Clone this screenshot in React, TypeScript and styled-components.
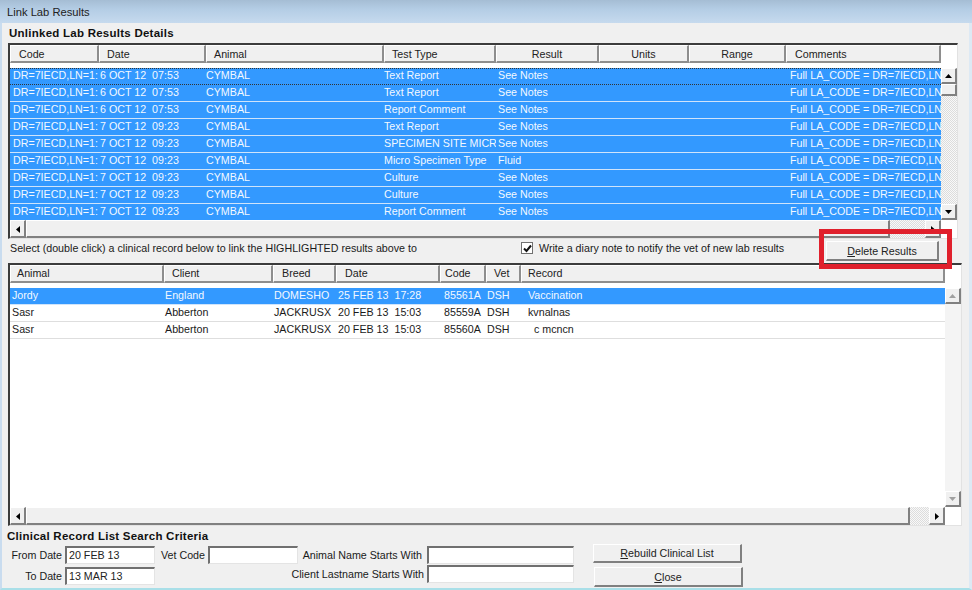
import React from 'react';
import styled, { createGlobalStyle, css } from 'styled-components';

const GlobalStyle = createGlobalStyle`
  html, body { margin: 0; padding: 0; height: 100%; overflow: hidden; }
  body { font-family: "Liberation Sans", Arial, sans-serif; font-size: 10.7px; color: #1a1a1a; }
`;

const dither = 'repeating-conic-gradient(#dcdcdc 0 25%, #f8f8f8 0 50%) 0 0 / 2px 2px';

const Window = styled.div`
  width: 972px;
  height: 590px;
  box-sizing: border-box;
  position: relative;
  background: #f0f0f0;
  display: flex;
  flex-direction: column;
  border-left: 2px solid #c9dcef;
  border-right: 3px solid #dde9f4;
  border-bottom: 2px solid #a9dfe8;
`;

const TitleBar = styled.div`
  height: 23px;
  margin: 0 -3px 0 -2px;
  padding: 0 0 0 7px;
  display: flex;
  align-items: center;
  font-size: 11.2px;
  color: #222;
  background: linear-gradient(#a5bdd4, #b4cde5 40%, #c6daee);
`;

const Body = styled.div`
  flex: 1;
  display: flex;
  flex-direction: column;
  padding: 0 0 0 6px;
`;

const SectionTitle = styled.div<{ $top: number; $left: number }>`
  font-weight: bold;
  font-size: 11.5px;
  color: #111;
  height: 14px;
  line-height: 14px;
  margin: ${p => p.$top}px 0 0 ${p => p.$left}px;
  letter-spacing: 0.25px;
  white-space: nowrap;
`;

const Panel = styled.div<{ $width: number; $height: number; $marginTop: number }>`
  width: ${p => p.$width}px;
  height: ${p => p.$height}px;
  margin-top: ${p => p.$marginTop}px;
  box-sizing: border-box;
  flex-shrink: 0;
  background: #fff;
  border-top: 2px solid #3c3c3c;
  border-left: 2px solid #3c3c3c;
  border-right: 1px solid #e2e2e2;
  border-bottom: 1px solid #e2e2e2;
  display: grid;
  grid-template-columns: 1fr 16px;
  grid-template-rows: 18px 1fr 18px;
`;

const HeaderRow = styled.div<{ $cols: string }>`
  grid-column: 1;
  display: grid;
  grid-template-columns: ${p => p.$cols};
  height: 18px;
`;

const HeaderCell = styled.div<{ $pad: number; $center?: boolean; $line: number }>`
  box-sizing: border-box;
  background: #f0f0f0;
  border-top: 1px solid #fff;
  border-left: 1px solid #fff;
  border-right: 2px solid #8e8e8e;
  border-bottom: 2px solid #8e8e8e;
  padding-left: ${p => p.$pad}px;
  line-height: ${p => p.$line}px;
  color: #222;
  white-space: nowrap;
  overflow: hidden;
  ${p => p.$center && css`
    text-align: center;
    padding-left: 0;
  `}
`;

const Rows = styled.div`
  grid-column: 1;
  grid-row: 2;
  padding-top: 5px;
  overflow: hidden;
`;

const Row = styled.div<{ $cols: string; $selected?: boolean; $focus?: boolean }>`
  display: grid;
  grid-template-columns: ${p => p.$cols};
  box-sizing: border-box;
  height: 17px;
  line-height: 15px;
  border-bottom: 1px solid #dedede;
  ${p => p.$selected && css`
    background: #3399ff;
    color: #f2f8ff;
    border-bottom-color: #cfe4fb;
  `}
  ${p => p.$focus && css`
    border-top: 1px dotted #333;
    border-bottom: 1px dotted #333;
    line-height: 13px;
  `}
`;

const Cell = styled.div<{ $pad: number }>`
  padding-left: ${p => p.$pad}px;
  white-space: pre;
  overflow: hidden;
`;

const VScroll = styled.div`
  grid-column: 2;
  grid-row: 2;
  display: flex;
  flex-direction: column;
  margin-top: 5px;
`;

const HScroll = styled.div`
  grid-column: 1;
  grid-row: 3;
  display: flex;
  background: #f0f0f0;
`;

const ArrowButton = styled.div<{ $disabled?: boolean; $horizontal?: boolean }>`
  width: 16px;
  height: ${p => (p.$horizontal ? 18 : 16)}px;
  padding-top: ${p => (p.$horizontal ? 2 : 0)}px;
  flex-shrink: 0;
  box-sizing: border-box;
  background: #f0f0f0;
  border-top: 1px solid #fff;
  border-left: 1px solid #fff;
  border-right: 2px solid #808080;
  border-bottom: 2px solid #808080;
  display: flex;
  align-items: center;
  justify-content: center;
  color: ${p => (p.$disabled ? '#a0a0a0' : '#000')};
`;

const Thumb = styled.div`
  flex-shrink: 0;
  box-sizing: border-box;
  background: #f0f0f0;
  border-top: 1px solid #fff;
  border-left: 1px solid #fff;
  border-right: 2px solid #808080;
  border-bottom: 2px solid #808080;
`;

const VThumb = styled(Thumb)`
  height: 12px;
`;

const HThumb = styled(Thumb)<{ $width: number }>`
  width: ${p => p.$width}px;
`;

const Track = styled.div<{ $plain?: boolean }>`
  flex: 1;
  background: ${p => (p.$plain ? '#f4f4f4' : dither)};
`;

const MiddleBar = styled.div`
  height: 24px;
  display: flex;
  align-items: flex-start;
  width: 950px;
`;

const Hint = styled.div`
  width: 513px;
  padding: 2px 0 0 2px;
  box-sizing: border-box;
  line-height: 14px;
`;

const CheckLabel = styled.label`
  display: flex;
  align-items: center;
  gap: 6px;
  width: 305px;
  line-height: 14px;
  padding-top: 2px;
`;

const CheckBox = styled.span`
  width: 12px;
  height: 12px;
  box-sizing: border-box;
  background: #fff;
  border: 1px solid #707070;
  display: flex;
  align-items: center;
  justify-content: center;
`;

const Button = styled.div<{ $width: number; $height: number }>`
  width: ${p => p.$width}px;
  height: ${p => p.$height}px;
  box-sizing: border-box;
  flex-shrink: 0;
  background: #f0f0f0;
  border-top: 1px solid #fff;
  border-left: 1px solid #fff;
  border-right: 2px solid #808080;
  border-bottom: 2px solid #808080;
  display: flex;
  align-items: center;
  justify-content: center;
  color: #222;
`;

const DeleteWrap = styled.div`
  padding-top: 2px;
`;

const Annotation = styled.div`
  position: absolute;
  left: 817px;
  top: 229px;
  width: 133px;
  height: 40px;
  box-sizing: border-box;
  border: 5px solid #e0202c;
  pointer-events: none;
`;

const Search = styled.div`
  display: flex;
  margin-top: 3px;
`;

const FieldColumn = styled.div<{ $width: number; $gap?: number }>`
  width: ${p => p.$width}px;
  flex-shrink: 0;
  display: flex;
  flex-direction: column;
  gap: ${p => p.$gap ?? 3}px;
`;

const NamesColumn = styled(FieldColumn)`
  margin-left: -8px;
`;

const Field = styled.div<{ $gap?: number }>`
  display: flex;
  align-items: center;
  justify-content: flex-end;
  gap: ${p => p.$gap ?? 3}px;
  height: 18px;
  white-space: nowrap;
`;

const Input = styled.div<{ $width: number }>`
  width: ${p => p.$width}px;
  height: 18px;
  box-sizing: border-box;
  background: #fff;
  border-top: 2px solid #707070;
  border-left: 2px solid #707070;
  border-right: 1px solid #e4e4e4;
  border-bottom: 1px solid #e4e4e4;
  padding-left: 2px;
  line-height: 15px;
  color: #222;
`;

const ButtonColumn = styled.div`
  margin: -2px 0 0 19px;
  display: flex;
  flex-direction: column;
  gap: 4px;
`;

const CloseButton = styled(Button)`
  margin-left: 1px;
`;

const Up = ({ color = '#000' }: { color?: string }) => (
  <svg width="7" height="4" viewBox="0 0 7 4"><path d="M3.5 0L7 4H0z" fill={color} /></svg>
);
const Down = ({ color = '#000' }: { color?: string }) => (
  <svg width="7" height="4" viewBox="0 0 7 4"><path d="M0 0h7L3.5 4z" fill={color} /></svg>
);
const Left = () => (
  <svg width="4" height="7" viewBox="0 0 4 7"><path d="M4 0v7L0 3.5z" fill="#000" /></svg>
);
const Right = () => (
  <svg width="4" height="7" viewBox="0 0 4 7"><path d="M0 0l4 3.5L0 7z" fill="#000" /></svg>
);

const labCols = '89px 107px 178px 112px 103px 90px 97px 155px';
const labHeaders: [string, number, boolean?][] = [
  ['Code', 8],
  ['Date', 7],
  ['Animal', 7],
  ['Test Type', 7],
  ['Result', 0, true],
  ['Units', 0, true],
  ['Range', 0, true],
  ['Comments', 8],
];
const labPads = [3, 1, 0, 0, 2, 0, 0, 4];
const code = 'DR=7IECD,LN=1:';
const full = 'Full LA_CODE = DR=7IECD,LN=1';
const labRows = [
  ['6 OCT 12  07:53', 'Text Report', 'See Notes'],
  ['6 OCT 12  07:53', 'Text Report', 'See Notes'],
  ['6 OCT 12  07:53', 'Report Comment', 'See Notes'],
  ['7 OCT 12  09:23', 'Text Report', 'See Notes'],
  ['7 OCT 12  09:23', 'SPECIMEN SITE MICRO', 'See Notes'],
  ['7 OCT 12  09:23', 'Micro Specimen Type', 'Fluid'],
  ['7 OCT 12  09:23', 'Culture', 'See Notes'],
  ['7 OCT 12  09:23', 'Culture', 'See Notes'],
  ['7 OCT 12  09:23', 'Report Comment', 'See Notes'],
];

const clinicalCols = '154px 109px 63px 104px 46px 35px 424px';
const clinicalHeaders: [string, number][] = [
  ['Animal', 6],
  ['Client', 7],
  ['Breed', 8],
  ['Date', 8],
  ['Code', 4],
  ['Vet', 7],
  ['Record', 6],
];
const clinicalPads = [2, 1, 1, 2, 4, 1, 7];
const clinicalRows = [
  ['Jordy', 'England', 'DOMESHO', '25 FEB 13  17:28', '85561A', 'DSH', 'Vaccination'],
  ['Sasr', 'Abberton', 'JACKRUSX', '20 FEB 13  15:03', '85559A', 'DSH', 'kvnalnas'],
  ['Sasr', 'Abberton', 'JACKRUSX', '20 FEB 13  15:03', '85560A', 'DSH', '  c mcncn'],
];

export default function App() {
  return (
    <Window>
      <GlobalStyle />
      <TitleBar>Link Lab Results</TitleBar>
      <Body>
        <SectionTitle $top={3} $left={1}>Unlinked Lab Results Details</SectionTitle>
        <Panel $width={950} $height={196} $marginTop={3}>
          <HeaderRow $cols={labCols}>
            {labHeaders.map(([label, pad, center]) => (
              <HeaderCell key={label} $pad={pad} $center={center} $line={17}>{label}</HeaderCell>
            ))}
          </HeaderRow>
          <Rows>
            {labRows.map((r, i) => (
              <Row key={i} $cols={labCols} $selected $focus={i === 0}>
                {[code, r[0], 'CYMBAL', r[1], r[2], '', '', full].map((text, c) => (
                  <Cell key={c} $pad={labPads[c]}>{text}</Cell>
                ))}
              </Row>
            ))}
          </Rows>
          <VScroll>
            <ArrowButton><Up /></ArrowButton>
            <VThumb />
            <Track />
            <ArrowButton><Down /></ArrowButton>
          </VScroll>
          <HScroll>
            <ArrowButton $horizontal><Left /></ArrowButton>
            <HThumb $width={864} />
            <Track />
            <ArrowButton $horizontal><Right /></ArrowButton>
          </HScroll>
        </Panel>
        <MiddleBar>
          <Hint>Select (double click) a clinical record below to link the HIGHLIGHTED results above to</Hint>
          <CheckLabel>
            <CheckBox>
              <svg width="9" height="9" viewBox="0 0 9 9"><path d="M1 4.5l2.5 2.5L8 1.5" fill="none" stroke="#111" strokeWidth="2" /></svg>
            </CheckBox>
            Write a diary note to notify the vet of new lab results
          </CheckLabel>
          <DeleteWrap>
            <Button $width={113} $height={20}><span><u>D</u>elete Results</span></Button>
          </DeleteWrap>
        </MiddleBar>
        <Panel $width={954} $height={263} $marginTop={0}>
          <HeaderRow $cols={clinicalCols}>
            {clinicalHeaders.map(([label, pad]) => (
              <HeaderCell key={label} $pad={pad} $line={15}>{label}</HeaderCell>
            ))}
          </HeaderRow>
          <Rows>
            {clinicalRows.map((r, i) => (
              <Row key={i} $cols={clinicalCols} $selected={i === 0}>
                {r.map((text, c) => (
                  <Cell key={c} $pad={clinicalPads[c]}>{text}</Cell>
                ))}
              </Row>
            ))}
          </Rows>
          <VScroll>
            <ArrowButton $disabled><Up color="#a0a0a0" /></ArrowButton>
            <Track $plain />
            <ArrowButton $disabled><Down color="#a0a0a0" /></ArrowButton>
          </VScroll>
          <HScroll>
            <ArrowButton $horizontal><Left /></ArrowButton>
            <HThumb $width={884} />
            <Track />
            <ArrowButton $horizontal><Right /></ArrowButton>
          </HScroll>
        </Panel>
        <SectionTitle $top={3} $left={-1}>Clinical Record List Search Criteria</SectionTitle>
        <Search>
          <FieldColumn $width={147}>
            <Field>From Date<Input $width={90}>20 FEB 13</Input></Field>
            <Field>To Date<Input $width={90}>13 MAR 13</Input></Field>
          </FieldColumn>
          <FieldColumn $width={143}>
            <Field>Vet Code<Input $width={90} /></Field>
          </FieldColumn>
          <NamesColumn $width={284} $gap={1}>
            <Field $gap={5}>Animal Name Starts With<Input $width={147} /></Field>
            <Field>Client Lastname Starts With<Input $width={147} /></Field>
          </NamesColumn>
          <ButtonColumn>
            <Button $width={149} $height={19}><span><u>R</u>ebuild Clinical List</span></Button>
            <CloseButton $width={149} $height={20}><span><u>C</u>lose</span></CloseButton>
          </ButtonColumn>
        </Search>
      </Body>
      <Annotation />
    </Window>
  );
}
